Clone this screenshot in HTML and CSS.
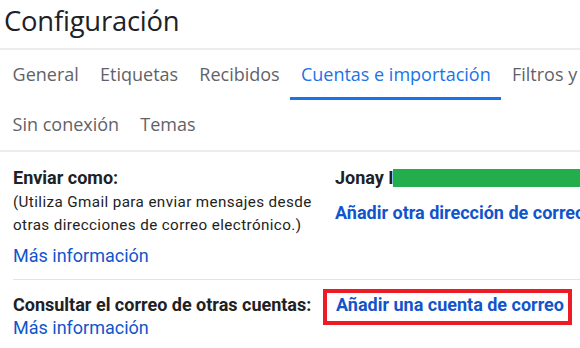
FILE: index.html
```html
<!DOCTYPE html>
<html lang="es">
<head>
    <meta charset="UTF-8">
    <meta name="viewport" content="width=device-width, initial-scale=1.0">
    <title>Configuración</title>
    <link rel="stylesheet" href="styles.css">
</head>
<body>
    <header class="page-header">
        <h1>Configuración</h1>
    </header>

    <nav class="tabs">
        <div class="tab-row">
            <a class="tab">General</a>
            <a class="tab">Etiquetas</a>
            <a class="tab">Recibidos</a>
            <a class="tab active">Cuentas e importación</a>
            <a class="tab">Filtros y direcciones bloqueadas</a>
        </div>
        <div class="tab-row">
            <a class="tab">Sin conexión</a>
            <a class="tab">Temas</a>
        </div>
    </nav>

    <div class="settings">
        <div class="setting-row first">
            <div class="setting-label">
                <div class="label-title">Enviar como:</div>
                <div class="label-desc">(Utiliza Gmail para enviar mensajes desde otras direcciones de correo electrónico.)</div>
                <a class="learn-more">Más información</a>
            </div>
            <div class="setting-value">
                <div class="account-name">Jonay I<span class="redacted"></span></div>
                <a class="action-link add-address">Añadir otra dirección de correo</a>
            </div>
        </div>

        <div class="setting-row second">
            <div class="setting-label">
                <div class="label-title">Consultar el correo de otras cuentas:</div>
                <a class="learn-more tight">Más información</a>
            </div>
            <div class="setting-value">
                <span class="highlight"><a class="action-link">Añadir una cuenta de correo</a></span>
            </div>
        </div>
    </div>
</body>
</html>
```

FILE: styles.css
```css
:root {
    --text: #202124;
    --muted: #5f6368;
    --active: #1a73e8;
    --link: #1155cc;
    --line: #e3e3e3;
}

* {
    box-sizing: border-box;
}

html, body {
    overflow: hidden;
}

body {
    margin: 0;
    width: 580px;
    height: 348px;
    background: #fff;
    color: var(--text);
    font-family: Roboto, 'Noto Sans', sans-serif;
}

.page-header {
    height: 50px;
    padding-left: 4px;
    border-bottom: 2px solid #ececec;
}

.page-header h1 {
    margin: 0;
    font-family: 'Open Sans', sans-serif;
    font-weight: 400;
    font-size: 27.4px;
    line-height: 42px;
    letter-spacing: -0.2px;
}

.tabs {
    padding-left: 2px;
    border-bottom: 2px solid #ececec;
}

.tab-row {
    display: flex;
}

.tab {
    height: 50px;
    padding: 0 10.6px;
    line-height: 49px;
    font-family: 'Open Sans', sans-serif;
    font-size: 18px;
    color: var(--muted);
    white-space: nowrap;
}

.tab.active {
    color: var(--active);
    box-shadow: inset 0 -3px 0 var(--active);
}

.settings {
    margin-left: 13px;
}

.setting-row {
    display: grid;
    grid-template-columns: 322px 1fr;
    border-bottom: 1px solid var(--line);
}

.setting-row.first {
    padding: 14px 0 12px;
}

.setting-row.second {
    padding-top: 13px;
    border-bottom: none;
}

.setting-label {
    padding-right: 8px;
}

.label-title {
    font-weight: 700;
    font-size: 18px;
    line-height: 23px;
}

.label-desc {
    margin-top: 2px;
    font-size: 15.2px;
    line-height: 23px;
    letter-spacing: 0.4px;
    color: #222;
}

.learn-more {
    display: block;
    margin-top: 7px;
    font-size: 18px;
    line-height: 23px;
    color: var(--link);
}

.learn-more.tight {
    margin-top: 0;
}

.setting-value {
    white-space: nowrap;
}

.account-name {
    font-weight: 700;
    font-size: 18px;
    line-height: 23px;
}

.redacted {
    display: inline-block;
    width: 200px;
    height: 18px;
    margin-left: -1px;
    vertical-align: -3px;
    background: #23ad4c;
}

.action-link {
    font-weight: 700;
    font-size: 18px;
    line-height: 23px;
    color: var(--link);
}

.add-address {
    display: block;
    margin-top: 12px;
}

.highlight {
    display: inline-block;
    margin: -4px 0 0 -12px;
    padding: 0 4px 5px 9px;
    border: 4px solid #ed1c24;
}
```
